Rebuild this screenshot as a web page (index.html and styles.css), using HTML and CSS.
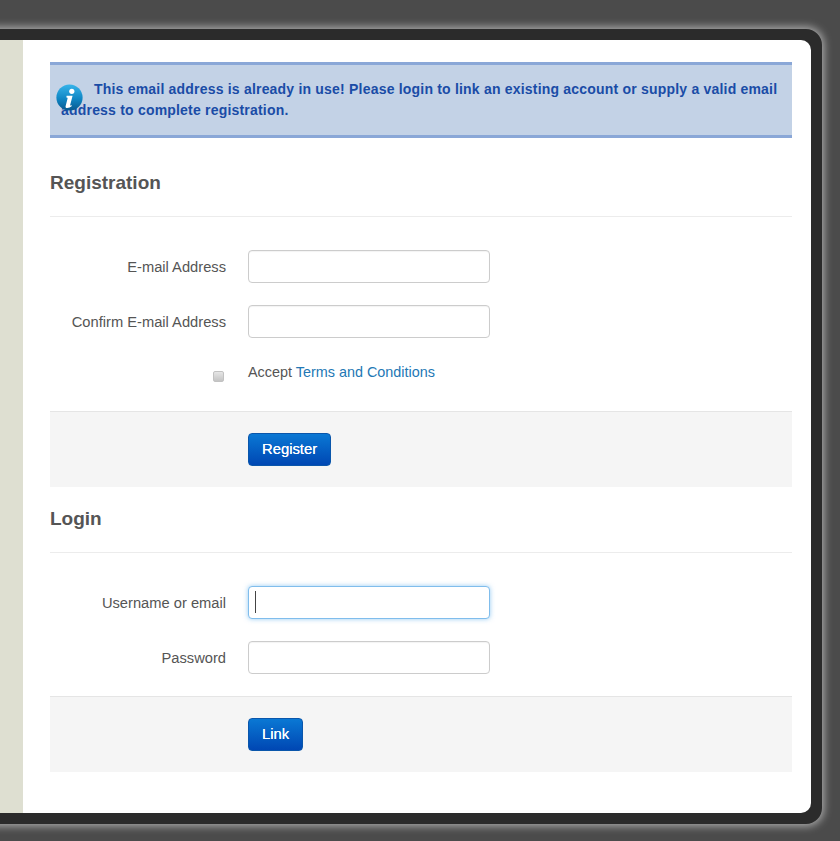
FILE: index.html
```html
<!DOCTYPE html>
<html lang="en">
<head>
  <meta charset="UTF-8" />
  <title>Registration</title>
  <link rel="stylesheet" href="styles.css">
</head>
<body>
  <div class="shell">
    <div class="sidebar"></div>
    <div class="content">
      <div class="alert">
        <svg class="alert-icon" width="27" height="27" viewBox="0 0 28 28">
          <defs>
            <linearGradient id="infoFill" x1="0" y1="0" x2="0" y2="1">
              <stop offset="0" stop-color="#37b4ea"/>
              <stop offset="0.55" stop-color="#0f86c4"/>
              <stop offset="1" stop-color="#07588f"/>
            </linearGradient>
          </defs>
          <circle cx="14" cy="14" r="13.6" fill="url(#infoFill)"/>
          <circle cx="16.4" cy="7.6" r="2.7" fill="#fff"/>
          <path d="M11 12.2h6.2l-2.5 9.6c-.2.7.5.8 1.6.2l.2.9c-1.5 1.3-3.2 2-5 2-1.2 0-1.9-.8-1.5-2.2l2-7.6c.2-.9-.3-1.1-1.3-1.1z" fill="#fff"/>
        </svg>
        <p class="alert-text">This email address is already in use! Please login to link an existing account or supply a valid email address to complete registration.</p>
      </div>

      <form class="panel">
        <h2 class="legend legend-first">Registration</h2>
        <div class="rows">
          <div class="row">
            <label class="row-label">E-mail Address</label>
            <input class="text-input" type="text" />
          </div>
          <div class="row">
            <label class="row-label">Confirm E-mail Address</label>
            <input class="text-input" type="text" />
          </div>
          <div class="row row-terms">
            <div class="row-label"><input class="check" type="checkbox" /></div>
            <div class="terms">Accept <a href="#">Terms and Conditions</a></div>
          </div>
        </div>
        <div class="actions">
          <button class="btn" type="button">Register</button>
        </div>
      </form>

      <form class="panel">
        <h2 class="legend">Login</h2>
        <div class="rows rows-login">
          <div class="row">
            <label class="row-label">Username or email</label>
            <div class="field">
              <input class="text-input is-focus" type="text" />
              <span class="caret"></span>
            </div>
          </div>
          <div class="row">
            <label class="row-label">Password</label>
            <input class="text-input" type="password" />
          </div>
        </div>
        <div class="actions">
          <button class="btn" type="button">Link</button>
        </div>
      </form>
    </div>
  </div>
</body>
</html>
```

FILE: styles.css
```css
html, body {
  height: 100%;
}
body {
  margin: 0;
  background: #4b4b4b;
  font-family: "Liberation Sans", Arial, sans-serif;
  font-size: 14px;
  color: #555;
  overflow: hidden;
  padding-top: 29px;
  box-sizing: border-box;
}
.shell {
  display: flex;
  width: 842px;
  height: 795px;
  box-sizing: border-box;
  margin-left: -20px;
  background: #2b2b2b;
  border: 11px solid #2b2b2b;
  border-radius: 16px;
  box-shadow: 0 0 9px 2px rgba(255, 255, 255, 0.55);
}
.sidebar {
  width: 32px;
  background: #dedfd1;
  border-radius: 10px 0 0 10px;
}
.content {
  flex: 1;
  background: #fff;
  border-radius: 0 10px 10px 0;
  padding: 22px 19px 0 27px;
}

/* alert */
.alert {
  position: relative;
  background: #c3d2e6;
  border-top: 3px solid #8aa7d7;
  border-bottom: 3px solid #8aa7d7;
  padding: 14px 11px 14px;
}
.alert-icon {
  position: absolute;
  left: 6px;
  top: 19px;
}
.alert-text {
  margin: 0;
  font-size: 14px;
  font-weight: bold;
  line-height: 21px;
  color: #1a4ca6;
  text-indent: 33px;
  letter-spacing: 0.2px;
}

/* forms */
.legend {
  margin: 0;
  padding: 14px 0 15px;
  font-size: 19px;
  line-height: 36px;
  font-weight: bold;
  color: #555;
  border-bottom: 1px solid #ececec;
}
.legend-first {
  padding-top: 27px;
}
.rows {
  display: flex;
  flex-direction: column;
  gap: 22px;
  padding: 33px 0 18px;
}
.rows-login {
  padding-bottom: 22px;
}
.row {
  display: grid;
  grid-template-columns: 176px 242px;
  column-gap: 22px;
  align-items: center;
  font-size: 14.7px;
}
.row-label {
  text-align: right;
}
.text-input {
  display: block;
  width: 100%;
  height: 33px;
  box-sizing: border-box;
  background: #fff;
  border: 1px solid #ccc;
  border-radius: 4px;
  box-shadow: inset 0 1px 1px rgba(0, 0, 0, 0.05);
  outline: none;
}
.text-input.is-focus {
  border-color: #80bdec;
  box-shadow: 0 0 5px rgba(82, 168, 236, 0.6);
}
.field {
  position: relative;
}
.caret {
  position: absolute;
  left: 7px;
  top: 5px;
  width: 1px;
  height: 22px;
  background: #444;
}
.row-terms {
  height: 33px;
  align-items: start;
}
.check {
  appearance: none;
  display: block;
  width: 11px;
  height: 11px;
  margin: 11px 2px 0 auto;
  background: linear-gradient(#e6e6e6, #c4c4c4);
  border: 1px solid #c2c2c2;
  border-radius: 2px;
  box-sizing: border-box;
}
.terms {
  font-size: 14.4px;
  line-height: 24px;
}
.terms a {
  color: #2378b5;
  text-decoration: none;
}
.actions {
  background: #f5f5f5;
  border-top: 1px solid #e5e5e5;
  padding: 21px 0 21px 198px;
}
.btn {
  display: block;
  height: 33px;
  padding: 0 13px 1px;
  font-family: inherit;
  font-size: 14.8px;
  color: #fff;
  text-shadow: 0 0 0.6px #fff;
  background: linear-gradient(#0a78d4, #0047b3);
  border: 1px solid #0a56ab;
  border-radius: 4px;
}
```
